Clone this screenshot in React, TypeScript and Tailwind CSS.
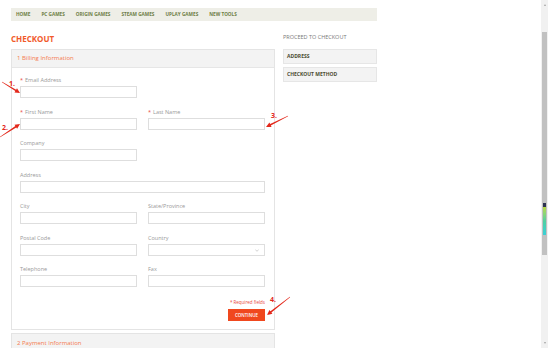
import React from 'react';

const navItems = ['HOME', 'PC GAMES', 'ORIGIN GAMES', 'STEAM GAMES', 'UPLAY GAMES', 'NEW TOOLS'];

interface FieldProps {
  label: string;
  required?: boolean;
  select?: boolean;
  wide?: boolean;
}

const Field: React.FC<FieldProps> = ({ label, required, select, wide }) => (
  <div className={wide ? 'col-span-2' : ''}>
    <div className="mb-[2px] h-[8px] text-[5.5px] leading-[8px] text-[#999999]">
      {required && <span className="mr-[2px] text-[#e8453c]">*</span>}
      {label}
    </div>
    <div className="relative h-[12px] border border-[#dedede] bg-white">
      {select && (
        <svg className="absolute right-[5px] top-[4px]" width="4" height="3" viewBox="0 0 4 3">
          <path d="M0.3 0.5 L2 2.3 L3.7 0.5" fill="none" stroke="#b5b5b5" strokeWidth="0.6" />
        </svg>
      )}
    </div>
  </div>
);

// tapered red arrow for the annotations
const Arrow: React.FC<{ x1: number; y1: number; x2: number; y2: number }> = ({ x1, y1, x2, y2 }) => {
  const dx = x2 - x1;
  const dy = y2 - y1;
  const len = Math.hypot(dx, dy);
  const ux = dx / len;
  const uy = dy / len;
  const nx = -uy;
  const ny = ux;
  const head = 5;
  const bx = x2 - ux * head;
  const by = y2 - uy * head;
  const pts = [
    [x1 + nx * 0.2, y1 + ny * 0.2],
    [bx + nx * 0.8, by + ny * 0.8],
    [bx + nx * 2.4, by + ny * 2.4],
    [x2, y2],
    [bx - nx * 2.4, by - ny * 2.4],
    [bx - nx * 0.8, by - ny * 0.8],
    [x1 - nx * 0.2, y1 - ny * 0.2],
  ]
    .map((p) => p.map((v) => v.toFixed(2)).join(','))
    .join(' ');
  return <polygon points={pts} fill="#e3281b" />;
};

const Annotations: React.FC = () => (
  <svg className="pointer-events-none absolute left-0 top-0" width="550" height="348" viewBox="0 0 550 348">
    <Arrow x1={2} y1={82} x2={20} y2={93} />
    <Arrow x1={0} y1={137} x2={20} y2={124} />
    <Arrow x1={288} y1={116} x2={266} y2={127} />
    <Arrow x1={290} y1={297} x2={267} y2={315} />
    <g fill="#e3281b" fontSize="7" fontWeight="bold" fontFamily="'Open Sans', sans-serif">
      <text x="9" y="86">1.</text>
      <text x="2" y="130">2.</text>
      <text x="271" y="118">3.</text>
      <text x="270" y="302">4.</text>
    </g>
  </svg>
);

const Scrollbar: React.FC = () => (
  <div className="mr-[2px] flex w-[7px] flex-col items-center bg-[#f1f1f1]">
    <div className="mt-[4px] h-0 w-0 border-x-[1.5px] border-b-[2px] border-x-transparent border-b-[#a3a3a3]" />
    <div className="mt-[26px] flex h-[223px] w-[5px] flex-col items-center bg-[#c1c1c1]">
      <div className="mt-[171px] h-[4px] w-[3px] bg-[#2d3250]" />
      <div className="h-[28px] w-[3px] bg-gradient-to-b from-[#b6d83a] via-[#4fd0a0] to-[#3ad0d8]" />
    </div>
    <div className="flex-1" />
    <div className="mb-[4px] h-0 w-0 border-x-[1.5px] border-t-[2px] border-x-transparent border-t-[#a3a3a3]" />
  </div>
);

export default function App() {
  return (
    <div className="relative flex h-[348px] w-[550px] overflow-hidden bg-white font-['Open_Sans',sans-serif]">
      <div className="flex-1 pl-[11px] pt-[8px]">
        <nav className="flex h-[13px] w-[366px] items-center gap-[11px] bg-[#eeeee7] pl-[5px]">
          {navItems.map((item) => (
            <span key={item} className="text-[4.7px] font-bold leading-none text-[#6d7d45]">
              {item}
            </span>
          ))}
        </nav>

        <div className="mt-[13px] flex gap-[8px]">
          <main className="w-[264px]">
            <h1 className="h-[10px] text-[8px] font-bold leading-[10px] text-[#f15a2b]">CHECKOUT</h1>

            <section className="mt-[5px] border border-[#e4e4e4]">
              <div className="flex h-[18px] items-center border-b border-[#e6e6e6] bg-[#f3f3f3] pl-[5px] text-[6px] text-[#f47a4e]">
                1 Billing Information
              </div>
              <div className="flex flex-col pb-[8px] pl-[8px] pr-[9px] pt-[8px]">
                <div className="grid grid-cols-2 gap-x-[11px] gap-y-[9.5px]">
                  <Field label="Email Address" required />
                  <div />
                  <Field label="First Name" required />
                  <Field label="Last Name" required />
                  <Field label="Company" />
                  <div />
                  <Field label="Address" wide />
                  <Field label="City" />
                  <Field label="State/Province" />
                  <Field label="Postal Code" />
                  <Field label="Country" select />
                  <Field label="Telephone" />
                  <Field label="Fax" />
                </div>
                <div className="mt-[12px] text-right text-[4.5px] leading-[6px] text-[#e8453c]">* Required fields</div>
                <button className="mt-[4px] flex h-[12px] w-[37px] items-center justify-center self-end bg-[#f0481e] text-[4.5px] font-semibold text-white">
                  CONTINUE
                </button>
              </div>
            </section>

            <section className="mt-[3px] border border-[#e4e4e4]">
              <div className="flex h-[18px] items-center bg-[#f3f3f3] pl-[5px] text-[6px] text-[#f47a4e]">
                2 Payment Information
              </div>
            </section>
          </main>

          <aside className="w-[94px]">
            <div className="mb-[9px] text-[5.5px] leading-[6px] text-[#7a7a7a]">PROCEED TO CHECKOUT</div>
            <div className="flex flex-col gap-[3px]">
              <div className="flex h-[15px] items-center border border-[#e6e6e6] bg-[#f3f3f3] pl-[3px] text-[5px] font-bold text-[#4b4b30]">
                ADDRESS
              </div>
              <div className="flex h-[15px] items-center border border-[#e6e6e6] bg-[#f3f3f3] pl-[3px] text-[5px] font-bold text-[#4b4b30]">
                CHECKOUT METHOD
              </div>
            </div>
          </aside>
        </div>
      </div>
      <Scrollbar />
      <Annotations />
    </div>
  );
}
